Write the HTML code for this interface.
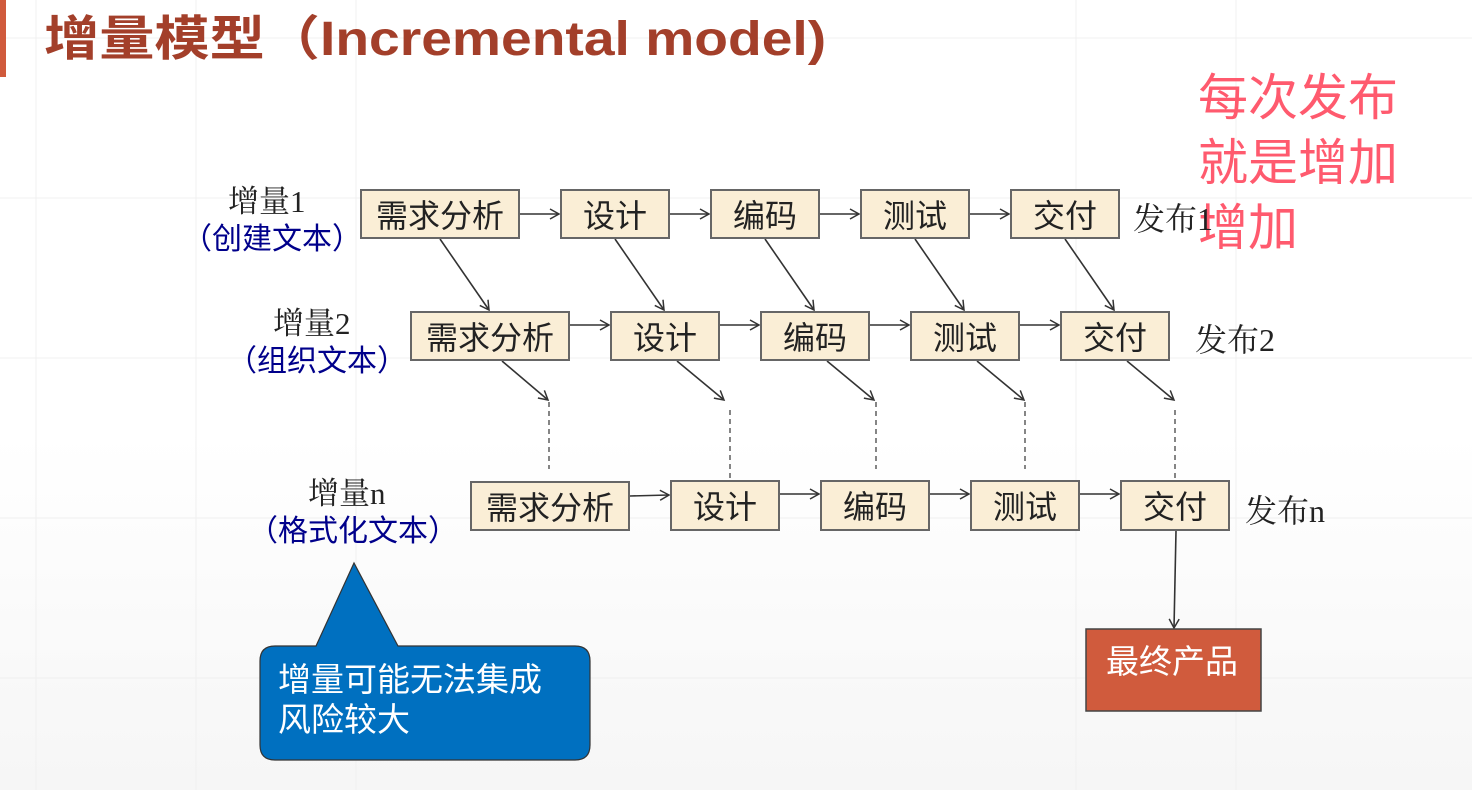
<!DOCTYPE html>
<html><head><meta charset="utf-8"><style>
body{margin:0;width:1472px;height:790px;overflow:hidden;background:linear-gradient(#fff 0,#fff 55%,#f6f6f6 100%);position:relative;font-family:"Liberation Sans","Noto Sans CJK SC",sans-serif}
.a{position:absolute;white-space:nowrap}
.b{position:absolute;background:#faeed6;border:2px solid #666;box-sizing:border-box;height:50px;font-size:32px;color:#222;text-align:center;line-height:50px}
.l{position:absolute;font-family:"Liberation Serif","Noto Serif CJK SC",serif;font-size:31px;color:#222;white-space:nowrap}
.s{position:absolute;font-size:30px;color:#00008b;white-space:nowrap;font-family:"Noto Sans CJK SC",sans-serif}
</style></head><body>
<svg class="a" style="left:0;top:0" width="1472" height="790">
<g stroke="#f0f0f0" stroke-width="1"><line x1="36" y1="0" x2="36" y2="790"/><line x1="196" y1="0" x2="196" y2="790"/><line x1="356" y1="0" x2="356" y2="790"/><line x1="1076" y1="0" x2="1076" y2="790"/><line x1="1236" y1="0" x2="1236" y2="790"/><line x1="0" y1="38" x2="1472" y2="38"/><line x1="0" y1="198" x2="1472" y2="198"/><line x1="0" y1="358" x2="1472" y2="358"/><line x1="0" y1="518" x2="1472" y2="518"/><line x1="0" y1="678" x2="1472" y2="678"/></g>
<rect x="0" y="0" width="6" height="77" fill="#d05a3c"/>
<defs><marker id="m" markerWidth="12" markerHeight="12" refX="10" refY="6" orient="auto" markerUnits="userSpaceOnUse"><path d="M1,1 L10,6 L1,11" fill="none" stroke="#333" stroke-width="1.5"/></marker></defs>
<g stroke="#333" stroke-width="1.6" fill="none" marker-end="url(#m)">
<line x1="520" y1="214" x2="559" y2="214"/><line x1="670" y1="214" x2="709" y2="214"/><line x1="820" y1="214" x2="859" y2="214"/><line x1="970" y1="214" x2="1009" y2="214"/>
<line x1="570" y1="325" x2="609" y2="325"/><line x1="720" y1="325" x2="759" y2="325"/><line x1="870" y1="325" x2="909" y2="325"/><line x1="1020" y1="325" x2="1059" y2="325"/>
<line x1="630" y1="496" x2="669" y2="495"/><line x1="780" y1="494" x2="819" y2="494"/><line x1="930" y1="494" x2="969" y2="494"/><line x1="1080" y1="494" x2="1119" y2="494"/>
<line x1="440" y1="239" x2="489" y2="310"/><line x1="615" y1="239" x2="664" y2="310"/><line x1="765" y1="239" x2="814" y2="310"/><line x1="915" y1="239" x2="964" y2="310"/><line x1="1065" y1="239" x2="1114" y2="310"/>
<line x1="502" y1="361" x2="548" y2="400"/><line x1="677" y1="361" x2="724" y2="400"/><line x1="827" y1="361" x2="874" y2="400"/><line x1="977" y1="361" x2="1024" y2="400"/><line x1="1127" y1="361" x2="1174" y2="400"/>
<line x1="1176" y1="531" x2="1174" y2="628"/>
</g>
<g stroke="#444" stroke-width="1.3" stroke-dasharray="5,4"><line x1="549" y1="402" x2="549" y2="469"/><line x1="730" y1="410" x2="730" y2="478"/><line x1="876" y1="402" x2="876" y2="469"/><line x1="1025" y1="402" x2="1025" y2="469"/><line x1="1175" y1="410" x2="1175" y2="478"/></g>
<path d="M275,646 L316,646 L354,563 L398,646 L575,646 Q590,646 590,661 L590,745 Q590,760 575,760 L275,760 Q260,760 260,745 L260,661 Q260,646 275,646 Z" fill="#0070c0" stroke="#333" stroke-width="1.2"/>
<rect x="1086" y="629" width="175" height="82" fill="#d05b3d" stroke="#444" stroke-width="1.5"/>
</svg>
<div class="a" style="left:44px;top:10px;font-size:48px;font-weight:bold;color:#a33f2a;line-height:60px;transform:scaleX(1.15);transform-origin:0 0">增量模型（Incremental model)</div>
<div class="a" style="left:1198px;top:66px;font-size:50px;color:#ff5a6e;line-height:65px">每次发布<br>就是增加<br>增加</div>
<div class="l" style="left:228px;top:176px">增量1</div><div class="s" style="left:182px;top:214px">（创建文本）</div>
<div class="l" style="left:273px;top:298px">增量2</div><div class="s" style="left:227px;top:336px">（组织文本）</div>
<div class="l" style="left:308px;top:468px">增量n</div><div class="s" style="left:248px;top:506px">（格式化文本）</div>
<div class="b" style="left:360px;top:189px;width:160px">需求分析</div><div class="b" style="left:560px;top:189px;width:110px">设计</div><div class="b" style="left:710px;top:189px;width:110px">编码</div><div class="b" style="left:860px;top:189px;width:110px">测试</div><div class="b" style="left:1010px;top:189px;width:110px">交付</div>
<div class="b" style="left:410px;top:311px;width:160px">需求分析</div><div class="b" style="left:610px;top:311px;width:110px">设计</div><div class="b" style="left:760px;top:311px;width:110px">编码</div><div class="b" style="left:910px;top:311px;width:110px">测试</div><div class="b" style="left:1060px;top:311px;width:110px">交付</div>
<div class="b" style="left:470px;top:481px;width:160px">需求分析</div><div class="b" style="left:670px;top:480px;width:110px;height:51px">设计</div><div class="b" style="left:820px;top:480px;width:110px;height:51px">编码</div><div class="b" style="left:970px;top:480px;width:110px;height:51px">测试</div><div class="b" style="left:1120px;top:480px;width:110px;height:51px">交付</div>
<div class="l" style="left:1133px;top:194px;font-size:32px">发布1</div>
<div class="l" style="left:1195px;top:315px;font-size:32px">发布2</div>
<div class="l" style="left:1245px;top:486px;font-size:32px">发布n</div>
<div class="a" style="left:278px;top:660px;font-size:33px;color:#fff;line-height:40px">增量可能无法集成<br>风险较大</div>
<div class="a" style="left:1106px;top:635px;font-size:33px;color:#fff">最终产品</div>
</body></html>
